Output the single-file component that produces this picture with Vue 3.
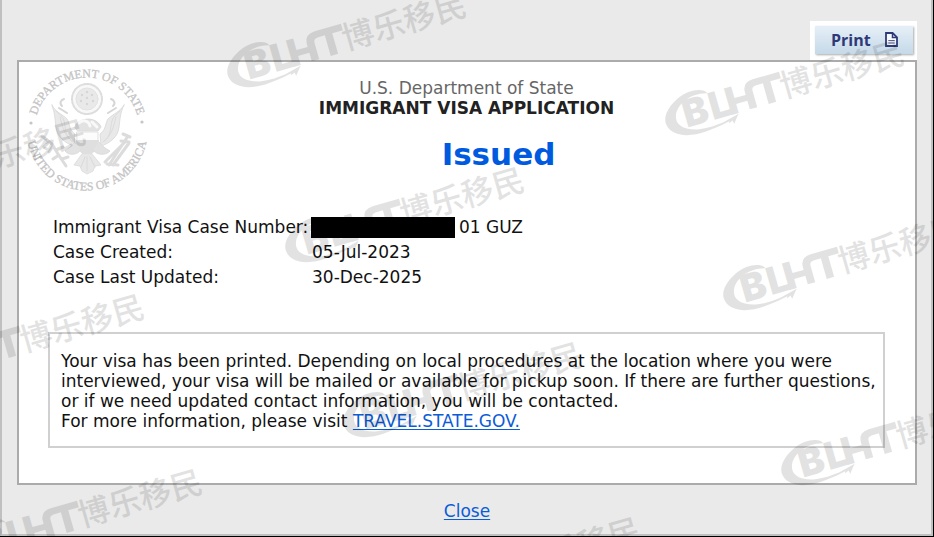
<script setup>
const caseRows = [
  { label: 'Immigrant Visa Case Number:', value: '01 GUZ', redacted: true },
  { label: 'Case Created:', value: '05-Jul-2023', redacted: false },
  { label: 'Case Last Updated:', value: '30-Dec-2025', redacted: false },
]

// Origins of the repeated, slanted watermark
const marks = [
  [210, 0],
  [648, 48],
  [-170, 127],
  [268, 175],
  [706, 223],
  [-112, 302],
  [326, 350],
  [764, 398],
  [-54, 477],
  [384, 525],
]
</script>

<template>
  <div class="edge">
    <div class="dialog">
      <div class="toolbar">
        <div class="print-wrap">
          <button class="print" type="button">
            <span>Print</span>
            <svg class="doc" viewBox="0 0 13 15" aria-hidden="true">
              <path d="M1 1h6.6L12 5.400V14H1z" fill="#f6f9fd" stroke="#2e3a78" stroke-width="1.800" />
              <path d="M7.500 1v4.500H12" fill="none" stroke="#2e3a78" stroke-width="1.500" />
              <path d="M3.300 8.500h6.400M3.300 11h6.400" stroke="#5a659a" stroke-width="1.100" />
            </svg>
          </button>
        </div>
      </div>

      <main class="panel">
        <svg class="seal" viewBox="0 0 124 124" role="img" aria-label="Department of State seal">
          <defs>
            <path id="arc-top" d="M9.500 62a52.500 52.500 0 0 1 105 0" />
            <path id="arc-bottom" d="M1.500 62a60.500 60.500 0 0 0 121 0" />
          </defs>
          <g class="seal-text">
            <text><textPath href="#arc-top" startOffset="50%">DEPARTMENT OF STATE</textPath></text>
            <text><textPath href="#arc-bottom" startOffset="50%">UNITED STATES OF AMERICA</textPath></text>
          </g>
          <circle cx="6" cy="55" r="1.600" fill="#c6c6c6" />
          <circle cx="117" cy="54" r="1.600" fill="#c6c6c6" />
          <g class="eagle" stroke-linecap="round" stroke-linejoin="round">
            <circle cx="62" cy="31" r="15" fill="#f7f7f7" stroke="#d8d8d8" stroke-width="2" stroke-dasharray="2 1.500" />
            <circle cx="62" cy="31" r="11" fill="#e6e6e6" stroke="#dedede" />
            <g fill="#cfcfcf">
              <circle cx="62" cy="24" r="1.200" /><circle cx="57" cy="27" r="1.200" /><circle cx="67" cy="27" r="1.200" />
              <circle cx="62" cy="30" r="1.200" /><circle cx="56" cy="33" r="1.200" /><circle cx="68" cy="33" r="1.200" />
              <circle cx="62" cy="36" r="1.200" />
            </g>
            <path d="M27 37c3 7 10 9 15 14 3 5 2 11 8 15l-1 12c-9-3-17-9-18-19-1-8-1-14-4-22z" fill="#e6e6e6" stroke="#d8d8d8" />
            <path d="M99 37c-4 7-11 9-16 14-3 5-2 11-8 15l1 12c9-3 17-9 18-19 1-8 1-14 5-22z" fill="#e6e6e6" stroke="#d8d8d8" />
            <path d="M31 43c6 5 8 7 9 15s3 13 8 16M35 49c3 11 4 18 12 24M95 43c-6 5-8 7-9 15s-3 13-8 16M91 49c-3 11-4 18-12 24" fill="none" stroke="#d6d6d6" />
            <path d="M37 38c-3-3-1-6 2-7M88 38c3-3 1-6-2-7M34 40l8 5M91 40l-8 5" fill="none" stroke="#d0d0d0" stroke-width="2" />
            <path d="M50 59c2-9 21-12 26 0l-3 4H53z" fill="#ddd" stroke="#d6d6d6" />
            <path d="M54 55c4-4 10-2 11 3M67 54l5 5" fill="none" stroke="#f8f8f8" stroke-width="3" />
            <path d="M52 64h21v8c0 7-5 12-11 15-6-3-10-8-10-15z" fill="#fcfcfc" stroke="#ddd" />
            <path d="M51 72h23c0 8-5 13-12 17-7-4-11-9-11-17z" fill="#dadada" />
            <path d="M50 74c-3 4-7 7-10 9 4 5 12 4 16-1M74 74c3 4 7 7 11 9-5 5-13 4-17-1" fill="#dedede" stroke="#d6d6d6" />
            <path d="M57 86l-8 11 6 1 2 5 5 3 6-3 2-5 6-1-9-11z" fill="#e4e4e4" stroke="#dadada" />
            <path d="M60 89l-4 10M62 89v14M65 89l5 10" fill="none" stroke="#d4d4d4" />
            <path d="M17 68l10 8 6 10 8 12M24 74l-5 5M28 78l-4 6M31 82l7-3M34 87l-6 4M37 91l6-2" fill="none" stroke="#d6d6d6" stroke-width="3" />
            <path d="M84 97l19-29M88 97l16-22M80 94l20-20M82 96l11 1M98 66l7 3M96 73l8 1" fill="none" stroke="#d6d6d6" stroke-width="3" />
          </g>
        </svg>

        <header class="heading">
          <p class="agency">U.S. Department of State</p>
          <h1>IMMIGRANT VISA APPLICATION</h1>
          <p class="status">Issued</p>
        </header>

        <dl class="facts">
          <template v-for="row in caseRows" :key="row.label">
            <dt>{{ row.label }}</dt>
            <dd><span v-if="row.redacted" class="redacted"></span>{{ row.value }}</dd>
          </template>
        </dl>

        <section class="message">
          <p>
            Your visa has been printed. Depending on local procedures at the location where you were
            interviewed, your visa will be mailed or available for pickup soon. If there are further
            questions, or if we need updated contact information, you will be contacted.
          </p>
          <p>For more information, please visit <a href="#travel">TRAVEL.STATE.GOV.</a></p>
        </section>
      </main>

      <footer class="footer"><a href="#close">Close</a></footer>
    </div>

    <svg class="watermark" aria-hidden="true">
      <g
        v-for="(m, i) in marks"
        :key="i"
        class="mark"
        :transform="`translate(${m[0]} ${m[1]}) rotate(-16) scale(.3333)`"
      >
        <path d="M134 180C128 160 84 152 44 170C6 188-16 214-10 240C-2 276 46 292 98 289C142 286 184 280 208 266C160 279 112 284 76 276C34 266 16 244 24 220C34 188 84 164 134 180Z" />
        <path d="M158 276L206 265L186 290L184 279L172 284L174 277Z" />
        <text class="latin" x="46" y="262">B</text>
        <text class="latin" x="128" y="262">L</text>
        <text class="latin" x="180" y="262">I</text>
        <path d="M205 216H243V204Q245 178 276 177H358V197H325V261H302V197H279Q266 198 266 210V261H243V234H205Z" />
        <text class="han" x="350" y="257">博乐移民</text>
      </g>
    </svg>
  </div>
</template>

<style>
body {
  margin: 0;
  background: #000;
}
</style>

<style scoped>
.edge {
  position: relative;
  overflow: hidden;
  padding: 0 1px 1px 0;
  background: #000;
  color: #111;
  font: 17px/20px Verdana, "DejaVu Sans", sans-serif;
}
p, h1, dl, dd {
  margin: 0;
}
a {
  color: #0b5cd8;
  text-decoration: underline;
  text-decoration-thickness: 1px;
  text-underline-offset: 2px;
}
.dialog {
  border: solid #c0c0c0;
  border-width: 0 2px 2px;
  padding: 21px 14px 0 15px;
  background: #eaeaea;
}
.toolbar {
  display: flex;
  justify-content: flex-end;
}
.print-wrap {
  padding: 5px 4px 6px 5px;
  background: #fff;
}
.print {
  display: flex;
  align-items: center;
  justify-content: space-between;
  box-sizing: border-box;
  width: 98px;
  height: 28px;
  padding: 0 15px 1px 16px;
  border: 0;
  background: linear-gradient(#e6eff7, #c5d9e8);
  box-shadow: 1px 1px 2px #aaa;
  color: #2e3a78;
  font: 700 16px/20px "Open Sans", "Noto Sans", sans-serif;
}
.doc {
  width: 13px;
  height: 15px;
}
.panel {
  position: relative;
  border: 2px solid #ababab;
  padding: 16px 30px 35px 29px;
  background: #fff;
}
.seal {
  position: absolute;
  top: 6px;
  left: 6px;
  width: 124px;
  height: 124px;
}
.seal-text {
  fill: #c4c4c4;
  stroke: #c4c4c4;
  stroke-width: .3px;
  font: 12px "Liberation Serif", serif;
  text-anchor: middle;
}
.eagle {
  opacity: .85;
}
.heading {
  text-align: center;
}
.agency {
  color: #666;
}
h1 {
  color: #222;
  font-size: 17px;
  line-height: 20px;
}
.status {
  padding: 16px 0 0 64px;
  color: #005ae0;
  font-size: 31px;
  font-weight: 700;
  line-height: 40px;
}
.facts {
  display: grid;
  grid-template-columns: 259px 1fr;
  padding: 41px 5px 0;
  line-height: 25px;
}
dd {
  display: flex;
  align-items: center;
}
.redacted {
  width: 144px;
  height: 21px;
  margin: 0 4px 0 -1px;
  background: #000;
}
.message {
  margin-top: 42px;
  border: 2px solid #d0d0d0;
  padding: 17px 2px 15px 11px;
}
.footer {
  padding: 16px 0 13px;
  text-align: center;
}
.watermark {
  position: absolute;
  inset: 0;
  width: 100%;
  height: 100%;
  pointer-events: none;
}
.mark {
  fill: #000;
  opacity: .11;
}
.latin {
  font: 900 114px Inter, sans-serif;
}
.han {
  font: 500 96px "Noto Sans CJK SC", sans-serif;
}
</style>
